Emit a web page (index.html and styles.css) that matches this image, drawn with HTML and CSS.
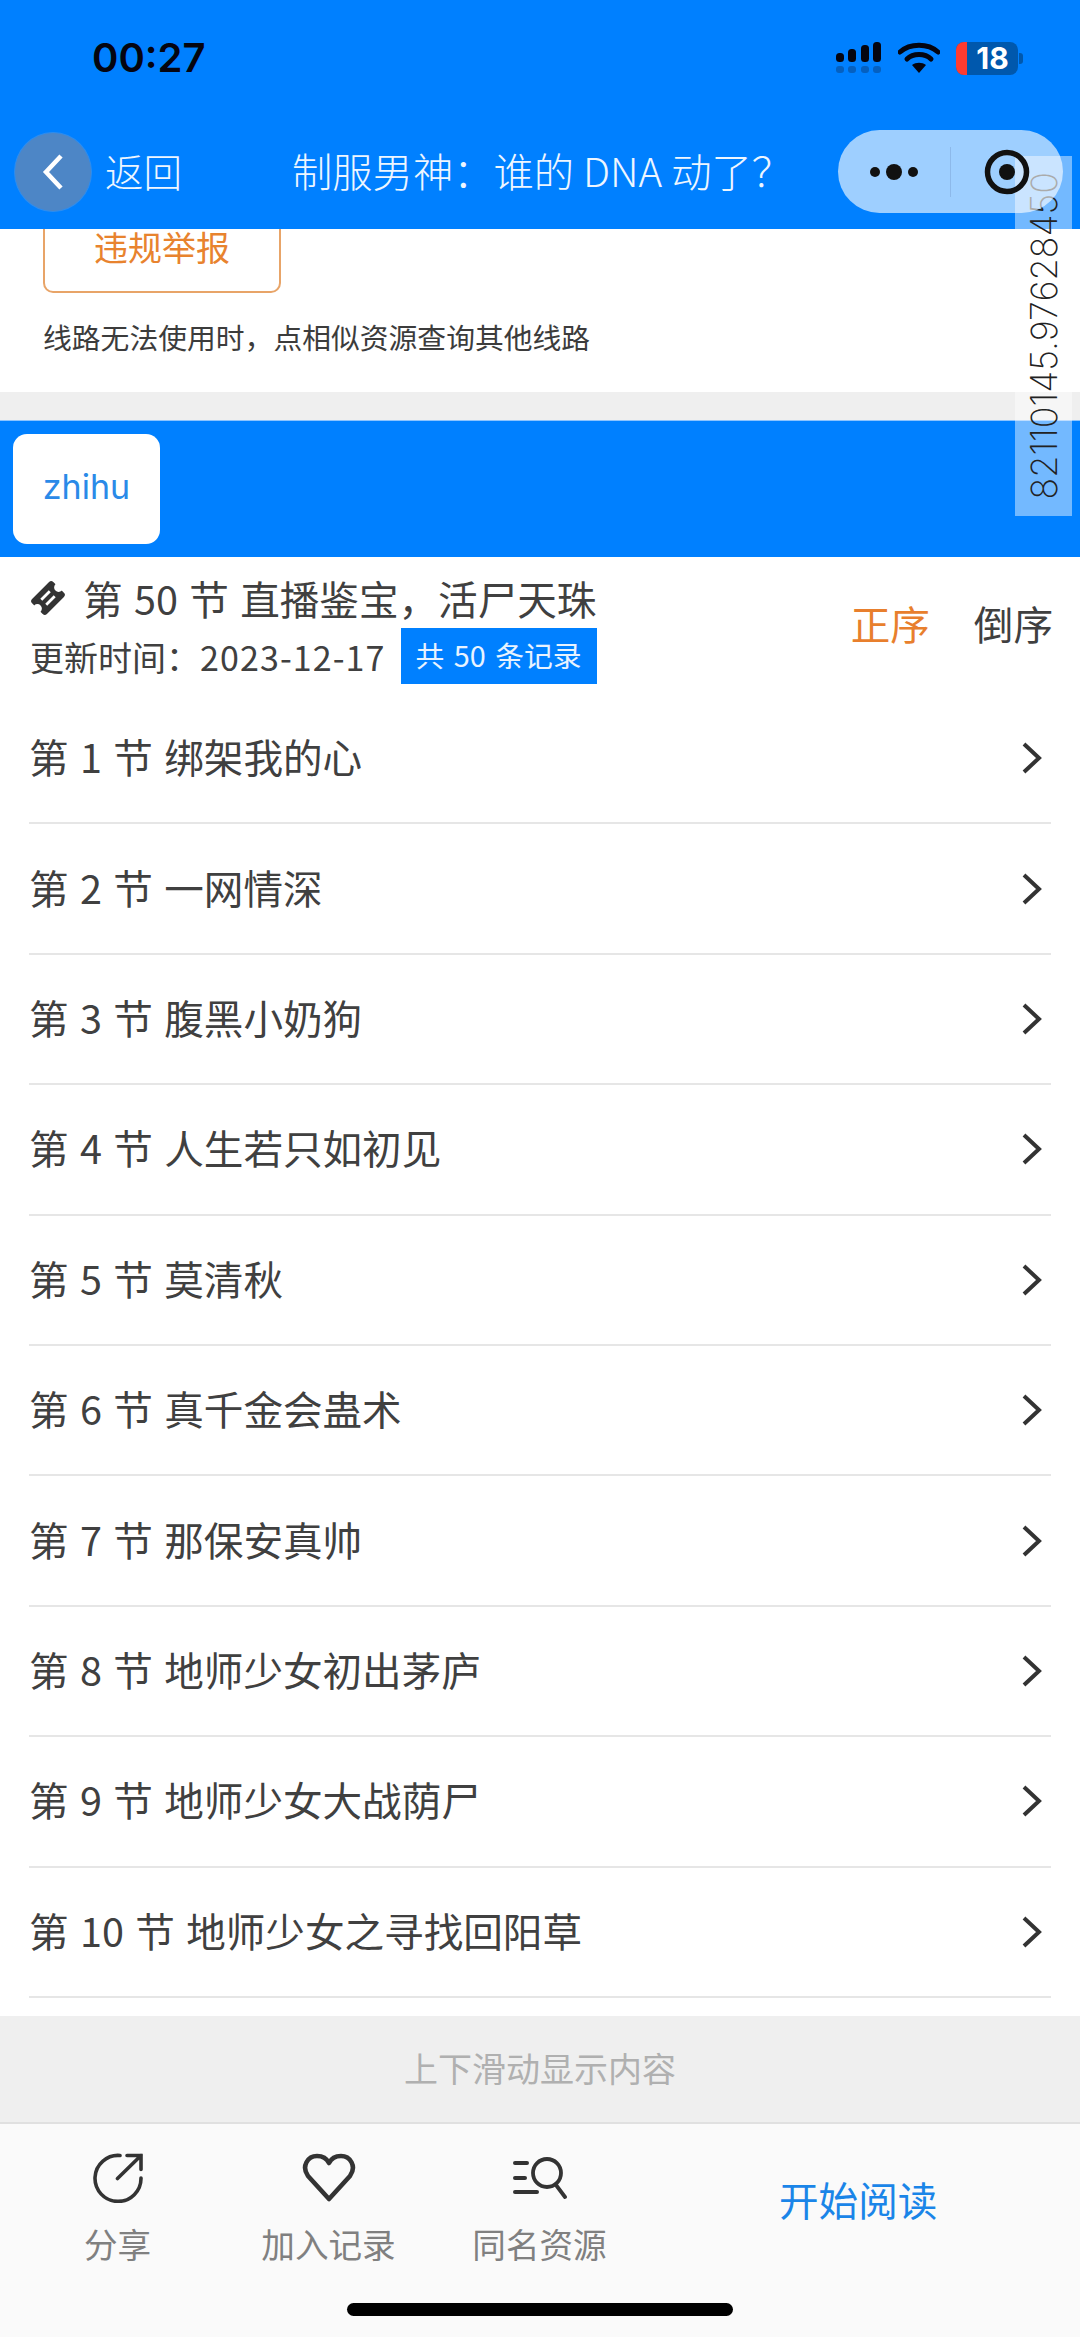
FILE: index.html
```html
<!DOCTYPE html>
<html lang="zh-CN">
   <head>
      <meta charset="UTF-8">
      <meta name="viewport" content="width=device-width, initial-scale=1.0">
      <title>制服男神：谁的 DNA 动了？</title>
      <link rel="stylesheet" href="styles.css">
   </head>
   <body>
      <div class="page">
         <header class="top">
            <div class="status">
               <span class="clock">00:27</span>
               <div class="status-icons">
                  <svg class="signal" width="46" height="32" viewBox="0 0 46 32">
                     <rect x="0" y="11" width="8" height="9" rx="3.5" fill="#050510"/>
                     <rect x="12" y="7" width="8" height="13" rx="3.5" fill="#050510"/>
                     <rect x="25" y="3" width="8" height="17" rx="3.5" fill="#050510"/>
                     <rect x="37" y="0" width="8" height="20" rx="3.5" fill="#050510"/>
                     <rect x="0" y="24" width="8" height="7" rx="3" fill="#0560c0"/>
                     <rect x="12" y="24" width="8" height="7" rx="3" fill="#0560c0"/>
                     <rect x="25" y="24" width="8" height="7" rx="3" fill="#0560c0"/>
                     <rect x="37" y="24" width="8" height="7" rx="3" fill="#0560c0"/>
                  </svg>
                  <svg class="wifi" width="42" height="32" viewBox="0 0 42 32">
                     <path d="M2 10 C12 1 30 1 40 10" fill="none" stroke="#050510" stroke-width="5" stroke-linecap="round"/>
                     <path d="M9 17 C15 11 27 11 33 17" fill="none" stroke="#050510" stroke-width="5" stroke-linecap="round"/>
                     <path d="M14 23 C18 20 24 20 28 23 L21 31 Z" fill="#050510"/>
                  </svg>
                  <div class="battery">
                     <span class="battery-low"></span>
                     <span class="battery-num">18</span>
                  </div>
               </div>
            </div>
            <nav class="nav">
               <span class="back">
                  <svg width="26" height="40" viewBox="0 0 26 40">
                     <path d="M21 4 L6 20 L21 36" fill="none" stroke="#fff" stroke-width="4.5"/>
                  </svg>
               </span>
               <span class="back-label">返回</span>
               <span class="nav-title">制服男神：谁的 DNA 动了？</span>
               <div class="capsule">
                  <svg class="capsule-more" width="56" height="20" viewBox="0 0 56 20">
                     <circle cx="9" cy="10" r="5" fill="#111"/>
                     <circle cx="28" cy="10" r="8" fill="#111"/>
                     <circle cx="47" cy="10" r="5" fill="#111"/>
                  </svg>
                  <span class="capsule-line"></span>
                  <svg class="capsule-close" width="46" height="46" viewBox="0 0 46 46">
                     <circle cx="23" cy="23" r="19.5" fill="none" stroke="#111" stroke-width="5.5"/>
                     <circle cx="23" cy="23" r="8" fill="#111"/>
                  </svg>
               </div>
            </nav>
         </header>

         <section class="report">
            <div class="report-btn">违规举报</div>
            <p class="report-note">线路无法使用时，点相似资源查询其他线路</p>
         </section>
         <div class="gap"></div>

         <section class="source-bar">
            <div class="source-tab">zhihu</div>
         </section>

         <section class="chapter-head">
            <div class="chapter-info">
               <div class="latest">
                  <svg class="ticket" width="36" height="36" viewBox="-18 -18 36 36">
                     <g transform="rotate(-45)">
                        <rect x="-15" y="-10.5" width="30" height="21" rx="3" fill="#333"/>
                        <circle cx="-15" cy="0" r="4.500" fill="#fff"/>
                        <circle cx="15" cy="0" r="4.500" fill="#fff"/>
                        <path d="M-6 -3.500 L6 -3.500 M-6 3.500 L6 3.500" stroke="#fff" stroke-width="2.800" fill="none"/>
                     </g>
                  </svg>
                  <span>第 50 节 直播鉴宝，活尸天珠</span>
               </div>
               <div class="updated">
                  <span>更新时间：<span class="date">2023-12-17</span></span>
                  <span class="total">共 50 条记录</span>
               </div>
            </div>
            <div class="sort">
               <span class="sort-on">正序</span>
               <span>倒序</span>
            </div>
         </section>

         <ul class="chapters">
            <li><span>第 1 节 绑架我的心</span><svg width="20" height="34" viewBox="0 0 20 34"><path d="M2 3 L17 17 L2 31" fill="none" stroke="#333" stroke-width="4"/></svg></li>
            <li><span>第 2 节 一网情深</span><svg width="20" height="34" viewBox="0 0 20 34"><path d="M2 3 L17 17 L2 31" fill="none" stroke="#333" stroke-width="4"/></svg></li>
            <li><span>第 3 节 腹黑小奶狗</span><svg width="20" height="34" viewBox="0 0 20 34"><path d="M2 3 L17 17 L2 31" fill="none" stroke="#333" stroke-width="4"/></svg></li>
            <li><span>第 4 节 人生若只如初见</span><svg width="20" height="34" viewBox="0 0 20 34"><path d="M2 3 L17 17 L2 31" fill="none" stroke="#333" stroke-width="4"/></svg></li>
            <li><span>第 5 节 莫清秋</span><svg width="20" height="34" viewBox="0 0 20 34"><path d="M2 3 L17 17 L2 31" fill="none" stroke="#333" stroke-width="4"/></svg></li>
            <li><span>第 6 节 真千金会蛊术</span><svg width="20" height="34" viewBox="0 0 20 34"><path d="M2 3 L17 17 L2 31" fill="none" stroke="#333" stroke-width="4"/></svg></li>
            <li><span>第 7 节 那保安真帅</span><svg width="20" height="34" viewBox="0 0 20 34"><path d="M2 3 L17 17 L2 31" fill="none" stroke="#333" stroke-width="4"/></svg></li>
            <li><span>第 8 节 地师少女初出茅庐</span><svg width="20" height="34" viewBox="0 0 20 34"><path d="M2 3 L17 17 L2 31" fill="none" stroke="#333" stroke-width="4"/></svg></li>
            <li><span>第 9 节 地师少女大战荫尸</span><svg width="20" height="34" viewBox="0 0 20 34"><path d="M2 3 L17 17 L2 31" fill="none" stroke="#333" stroke-width="4"/></svg></li>
            <li><span>第 10 节 地师少女之寻找回阳草</span><svg width="20" height="34" viewBox="0 0 20 34"><path d="M2 3 L17 17 L2 31" fill="none" stroke="#333" stroke-width="4"/></svg></li>
         </ul>

         <div class="hint">上下滑动显示内容</div>

         <footer class="bottom">
            <div class="tool">
               <svg width="50" height="50" viewBox="-1 -1 50 50">
                  <path d="M26 1.500 A23 23 0 1 0 47 24" fill="none" stroke="#333" stroke-width="3.600" stroke-linecap="round"/>
                  <path d="M23.500 24.500 L47 1.500 M33 1.500 L47 1.500 L47 15.500" fill="none" stroke="#333" stroke-width="3.600" stroke-linecap="round"/>
               </svg>
               <span>分享</span>
            </div>
            <div class="tool">
               <svg width="54" height="50" viewBox="0 0 54 50">
                  <path d="M27 46 L6 23 C-1 13 6 3 15 3 C21 3 25 6 27 10 C29 6 33 3 39 3 C48 3 55 13 48 23 Z" fill="none" stroke="#333" stroke-width="4.600" stroke-linejoin="round"/>
               </svg>
               <span>加入记录</span>
            </div>
            <div class="tool">
               <svg width="54" height="50" viewBox="0 -4 54 50">
                  <path d="M2 6 L14 6 M2 21 L12 21 M2 35 L24 35" fill="none" stroke="#333" stroke-width="4" stroke-linecap="round"/>
                  <circle cx="34" cy="16" r="14" fill="none" stroke="#333" stroke-width="3.800"/>
                  <path d="M43 28 L52 40" fill="none" stroke="#333" stroke-width="3.800" stroke-linecap="round"/>
               </svg>
               <span>同名资源</span>
            </div>
            <div class="start-read">开始阅读</div>
         </footer>

         <div class="home-bar"></div>
         <div class="watermark"><span>82110145.97628450</span></div>
      </div>
   </body>
</html>
```

FILE: styles.css
```css
* {
   box-sizing: border-box;
}
body {
   margin: 0;
   background: #fff;
   font-family: "Noto Sans CJK SC", "Noto Sans", sans-serif;
   color: #404040;
}
.page {
   position: relative;
   width: 1080px;
   height: 2337px;
   overflow: hidden;
   display: flex;
   flex-direction: column;
}

/* top bar */
.top {
   height: 229px;
   background: #0080ff;
   color: #eef6ff;
}
.status {
   height: 130px;
   padding: 0 62px 0 92px;
   display: flex;
   justify-content: space-between;
   align-items: flex-start;
}
.clock {
   margin-top: 31px;
   font-family: "Inter", "Liberation Sans", sans-serif;
   font-size: 40px;
   line-height: 54px;
   font-weight: 600;
   color: #050510;
}
.status-icons {
   margin-top: 42px;
   display: flex;
   gap: 16px;
}
.battery {
   position: relative;
   width: 62px;
   height: 33px;
   border-radius: 8px;
   background: #0058ad;
   display: flex;
}
.battery::after {
   content: "";
   position: absolute;
   right: -5px;
   top: 11px;
   width: 4px;
   height: 11px;
   border-radius: 0 3px 3px 0;
   background: #0058ad;
}
.battery-low {
   width: 11px;
   border-radius: 8px 0 0 8px;
   background: #ff3b30;
}
.battery-num {
   flex: 1;
   font-family: "Inter", "Liberation Sans", sans-serif;
   font-size: 30px;
   line-height: 33px;
   font-weight: 700;
   color: #fff;
   text-align: center;
}
.nav {
   position: relative;
   height: 83px;
   padding-left: 14px;
   display: flex;
   align-items: center;
}
.back {
   width: 78px;
   height: 80px;
   border-radius: 50%;
   background: #4d86c6;
   display: flex;
   align-items: center;
   justify-content: center;
   border: 1px solid #2d8df0;
}
.back-label {
   margin: 0 0 4px 13px;
   font-size: 38.500px;
   font-weight: 300;
}
.nav-title {
   margin: 0 0 4px 110px;
   font-size: 40.300px;
   font-weight: 300;
   white-space: nowrap;
}
.capsule {
   position: absolute;
   z-index: 2;
   left: 838px;
   top: 0;
   width: 225px;
   height: 83px;
   border-radius: 42px;
   background: rgba(255, 255, 255, 0.62);
   display: flex;
   align-items: center;
}
.capsule-more {
   margin-left: 28px;
}
.capsule-line {
   width: 1px;
   height: 50px;
   margin-left: 28px;
   background: #8db9ea;
}
.capsule-close {
   margin-left: 33px;
}

/* report block, scrolled partly under the bar */
.report {
   height: 163px;
   padding: 0 43px;
}
.report-btn {
   width: 238px;
   height: 64px;
   border: 2px solid #e8a468;
   border-top: 0;
   border-radius: 0 0 10px 10px;
   text-align: center;
   font-size: 34px;
   line-height: 36px;
   color: #e8832e;
}
.report-note {
   margin: 24px 0 0;
   font-size: 28.800px;
   line-height: 40px;
   color: #3c3c3c;
   white-space: nowrap;
}
.gap {
   height: 28px;
   background: #efefef;
}
.source-bar {
   height: 137px;
   padding: 13px;
   background: #0080ff;
   border-top: 1px solid #8cc4ff;
}
.source-tab {
   width: 147px;
   height: 110px;
   border-radius: 14px;
   background: #fff;
   text-align: center;
   font-family: "Inter", "Liberation Sans", sans-serif;
   font-size: 34px;
   line-height: 106px;
   color: #2a8ae8;
}

/* chapter list */
.chapter-head {
   height: 137px;
   padding: 15px 27px 0 30px;
   display: flex;
   justify-content: space-between;
}
.latest {
   display: flex;
   align-items: center;
   gap: 17px;
   font-size: 39.600px;
   line-height: 52px;
   word-spacing: 2.500px;
   white-space: nowrap;
}
.ticket {
   flex: none;
}
.updated {
   margin-top: 4px;
   display: flex;
   align-items: center;
   gap: 15px;
   font-size: 34px;
   white-space: nowrap;
}
.date {
   letter-spacing: 1.100px;
}
.total {
   height: 56px;
   padding: 0 15px;
   background: #0080ff;
   font-size: 28.800px;
   line-height: 54px;
   word-spacing: 3px;
   color: #e8f3ff;
}
.sort {
   height: 102px;
   display: flex;
   align-items: center;
   gap: 44px;
   font-size: 39.600px;
   line-height: 56px;
}
.sort-on {
   color: #e87f2d;
}
.chapters {
   list-style: none;
   margin: 0;
   padding: 0 29px;
}
.chapters li {
   height: 130.400px;
   padding: 0 9px 0 0;
   border-bottom: 2px solid #e6e6e6;
   display: flex;
   align-items: center;
   justify-content: space-between;
   font-size: 39.600px;
   word-spacing: 2.500px;
   white-space: nowrap;
}
.chapters li span {
   margin-bottom: 5px;
}
.hint {
   margin-top: 18px;
   height: 108px;
   background: #efefef;
   border-bottom: 2px solid #e0e0e0;
   text-align: center;
   font-size: 34px;
   line-height: 104px;
   color: #b0b0b0;
}
.bottom {
   flex: 1;
   background: #fafafa;
   display: flex;
   align-items: flex-start;
   padding: 29px 0 0 12px;
}
.tool {
   width: 211px;
   display: flex;
   flex-direction: column;
   align-items: center;
   font-size: 33.600px;
   line-height: 46px;
   color: #808080;
}
.tool span {
   margin-top: 18px;
}
.start-read {
   margin-left: 134px;
   margin-top: 21px;
   font-size: 39.600px;
   line-height: 50px;
   color: #1a85e8;
}

/* overlays */
.home-bar {
   position: absolute;
   left: 347px;
   top: 2303px;
   width: 386px;
   height: 13px;
   border-radius: 7px;
   background: #000;
}
.watermark {
   position: absolute;
   z-index: 1;
   left: 1015px;
   top: 156px;
   width: 57px;
   height: 360px;
   background: rgba(255, 255, 255, 0.45);
   display: flex;
   align-items: center;
   justify-content: center;
}
.watermark span {
   writing-mode: vertical-rl;
   transform: rotate(180deg);
   font-family: "Inter", "Liberation Sans", sans-serif;
   font-size: 36px;
   font-weight: 200;
   color: #222;
   white-space: nowrap;
}
```
